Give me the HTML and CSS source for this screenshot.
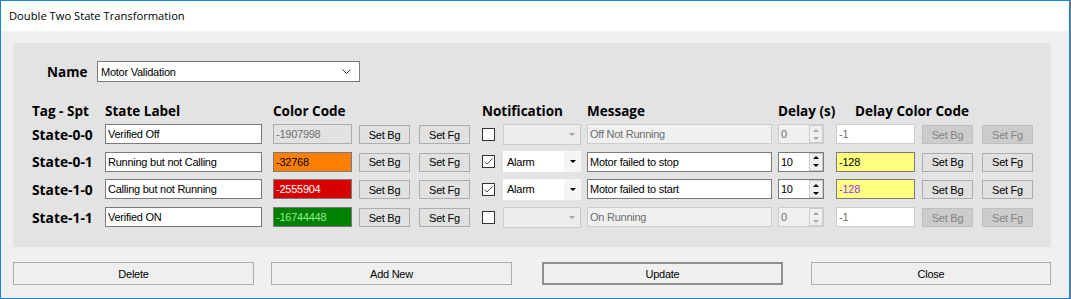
FILE: index.html
```html
<!DOCTYPE html>
<html lang="en">
<head>
    <meta charset="UTF-8">
    <title>Double Two State Transformation</title>
    <link rel="stylesheet" href="styles.css">
</head>
<body>

<div class="window">
    <div class="titlebar">Double Two State Transformation</div>

    <div class="client">
        <div class="panel">
            <div class="name-row">
                <label class="name-label">Name</label>
                <div class="combo name-combo">
                    <span>Motor Validation</span>
                    <svg class="chevron" width="9" height="5" viewBox="0 0 9 5"><polyline points="0.5,0.5 4.5,4.5 8.5,0.5" fill="none" stroke="#333" stroke-width="1"/></svg>
                </div>
            </div>

            <div class="states">
                <div class="head">Tag - Spt</div>
                <div class="head">State Label</div>
                <div class="head span3">Color Code</div>
                <div class="head span2">Notification</div>
                <div class="head">Message</div>
                <div class="head">Delay (s)</div>
                <div class="head span3 delay-head">Delay Color Code</div>

                <!-- State-0-0 -->
                <div class="tag">State-0-0</div>
                <input class="text label-box" value="Verified Off">
                <input class="text code off" value="-1907998" disabled>
                <button class="set">Set Bg</button>
                <button class="set">Set Fg</button>
                <span class="check"></span>
                <div class="combo notify disabled"><span></span><span class="arrow"><i></i></span></div>
                <input class="text msg" value="Off Not Running" disabled>
                <div class="spin disabled"><span>0</span><span class="spin-btns"><i class="up"></i><i class="down"></i></span></div>
                <input class="text code dim" value="-1" disabled>
                <button class="set" disabled>Set Bg</button>
                <button class="set" disabled>Set Fg</button>

                <!-- State-0-1 -->
                <div class="tag">State-0-1</div>
                <input class="text label-box" value="Running but not Calling">
                <input class="text code" style="background:#ff8000;color:#000" value="-32768">
                <button class="set">Set Bg</button>
                <button class="set">Set Fg</button>
                <span class="check checked"><svg width="11" height="11" viewBox="0 0 11 11"><polyline points="1.5,5.5 4,8 9.5,2.5" fill="none" stroke="#555" stroke-width="1"/></svg></span>
                <div class="combo notify"><span>Alarm</span><span class="arrow"><i></i></span></div>
                <input class="text msg" value="Motor failed to stop">
                <div class="spin"><span>10</span><span class="spin-btns"><i class="up"></i><i class="down"></i></span></div>
                <input class="text code" style="background:#ffff80;color:#000" value="-128">
                <button class="set">Set Bg</button>
                <button class="set">Set Fg</button>

                <!-- State-1-0 -->
                <div class="tag">State-1-0</div>
                <input class="text label-box" value="Calling but not Running">
                <input class="text code" style="background:#d90000;color:#fff" value="-2555904">
                <button class="set">Set Bg</button>
                <button class="set">Set Fg</button>
                <span class="check checked"><svg width="11" height="11" viewBox="0 0 11 11"><polyline points="1.5,5.5 4,8 9.5,2.5" fill="none" stroke="#555" stroke-width="1"/></svg></span>
                <div class="combo notify"><span>Alarm</span><span class="arrow"><i></i></span></div>
                <input class="text msg" value="Motor failed to start">
                <div class="spin"><span>10</span><span class="spin-btns"><i class="up"></i><i class="down"></i></span></div>
                <input class="text code" style="background:#ffff80;color:#9933ff" value="-128">
                <button class="set">Set Bg</button>
                <button class="set">Set Fg</button>

                <!-- State-1-1 -->
                <div class="tag">State-1-1</div>
                <input class="text label-box" value="Verified ON">
                <input class="text code" style="background:#008000;color:#90ee90" value="-16744448">
                <button class="set">Set Bg</button>
                <button class="set">Set Fg</button>
                <span class="check"></span>
                <div class="combo notify disabled"><span></span><span class="arrow"><i></i></span></div>
                <input class="text msg" value="On Running" disabled>
                <div class="spin disabled"><span>0</span><span class="spin-btns"><i class="up"></i><i class="down"></i></span></div>
                <input class="text code dim" value="-1" disabled>
                <button class="set" disabled>Set Bg</button>
                <button class="set" disabled>Set Fg</button>
            </div>
        </div>

        <div class="actions">
            <button class="action">Delete</button>
            <button class="action add">Add New</button>
            <button class="action update">Update</button>
            <button class="action close">Close</button>
        </div>
    </div>
</div>

</body>
</html>
```

FILE: styles.css
```css
body {
    margin: 0;
    background-color: #6f8196;
    font-family: "Liberation Sans", Arial, sans-serif;
    font-size: 11px;
    letter-spacing: -0.25px;
    color: #000;
}

.window {
    width: 1068px;
    height: 297px;
    border: 1px solid #1883d7;
    background-color: #f0f0f0;
}

.titlebar {
    height: 30px;
    line-height: 30px;
    padding-left: 8px;
    background-color: #fff;
    font-family: "Open Sans", sans-serif;
    font-size: 11.2px;
    letter-spacing: 0;
}

.client {
    padding: 12px 0 0 12px;
}

.panel {
    width: 1038px;
    height: 204px;
    box-sizing: border-box;
    padding: 18px 0 0 19px;
    background-color: #e3e3e3;
}

.name-row {
    display: flex;
    align-items: center;
    height: 21px;
}

.name-label {
    width: 65px;
    box-sizing: border-box;
    padding-left: 15px;
    font-family: "Open Sans", sans-serif;
    font-weight: bold;
    font-size: 13.5px;
    letter-spacing: 0;
}

.combo {
    display: flex;
    align-items: center;
    box-sizing: border-box;
    background-color: #fff;
}

.name-combo {
    width: 263px;
    height: 21px;
    padding: 0 8px 0 3px;
    border: 1px solid #7a7a7a;
    justify-content: space-between;
}

.states {
    margin-top: 23.5px;
    display: grid;
    grid-template-columns: 73px 168px 86px 60px 63px 21px 84px 191px 58px 86px 60px 52px;
    grid-template-rows: 11px repeat(4, 20px);
    row-gap: 7.67px;
    align-items: center;
}

.head {
    line-height: 11px;
    white-space: nowrap;
    font-family: "Open Sans", sans-serif;
    font-weight: bold;
    font-size: 13.5px;
    letter-spacing: 0;
    padding-top: 1px;
}
.span3 { grid-column: span 3; }
.span2 { grid-column: span 2; }
.delay-head { padding-left: 19px; }

.tag {
    font-family: "Open Sans", sans-serif;
    font-weight: bold;
    font-size: 13.8px;
    letter-spacing: 0;
    white-space: nowrap;
}

.text {
    height: 20px;
    box-sizing: border-box;
    margin: 0;
    padding: 0 0 0 2px;
    border: 1px solid #7a7a7a;
    background-color: #fff;
    font-family: "Liberation Sans", Arial, sans-serif;
    font-size: 11px;
    letter-spacing: -0.25px;
    color: #000;
    outline: none;
}
.label-box { width: 157px; }
.code { width: 79px; }
.msg { width: 185px; }

.text:disabled {
    border-color: #cccccc;
    background-color: #f0f0f0;
    color: #6d6d6d;
}
.text.off:disabled {
    border-color: #adadad;
    background-color: #e2e2e2;
}
.text.dim:disabled {
    background-color: #fff;
}

.set {
    width: 51px;
    height: 19px;
    margin: 1px 0 0 0;
    padding: 0;
    border: 1px solid #adadad;
    background-color: #e1e1e1;
    font-family: "Liberation Sans", Arial, sans-serif;
    font-size: 11px;
    letter-spacing: -0.25px;
    color: #000;
}
.set:disabled {
    border-color: #bfbfbf;
    background-color: #cccccc;
    color: #838383;
}

.check {
    width: 13px;
    height: 13px;
    box-sizing: border-box;
    border: 1px solid #333;
    background-color: #fff;
    display: flex;
    align-items: center;
    justify-content: center;
}

.notify {
    width: 78px;
    height: 21px;
    padding-left: 4px;
    justify-content: space-between;
}
.notify .arrow {
    width: 17px;
    height: 100%;
    display: flex;
    align-items: center;
    justify-content: center;
    background-color: #f5f5f5;
}
.arrow i {
    border-left: 3px solid transparent;
    border-right: 3px solid transparent;
    border-top: 3px solid #000;
}
.notify.disabled {
    border: 1px solid #cccccc;
    background-color: #ececec;
}
.notify.disabled .arrow { background-color: transparent; }
.notify.disabled .arrow i { border-top-color: #a6a6a6; }

.spin {
    width: 46px;
    height: 20px;
    box-sizing: border-box;
    border: 1px solid #7a7a7a;
    background-color: #fff;
    display: flex;
    justify-content: space-between;
    align-items: center;
    padding-left: 2px;
    font-size: 11px;
}
.spin-btns {
    width: 14px;
    height: 18px;
    box-sizing: border-box;
    border: 1px solid #cccccc;
    display: flex;
    flex-direction: column;
    align-items: center;
    justify-content: space-around;
    background-color: #f0f0f0;
}
.spin-btns .up {
    border-left: 3px solid transparent;
    border-right: 3px solid transparent;
    border-bottom: 3px solid #000;
}
.spin-btns .down {
    border-left: 3px solid transparent;
    border-right: 3px solid transparent;
    border-top: 3px solid #000;
}
.spin.disabled {
    border-color: #cccccc;
    background-color: #f0f0f0;
    color: #6d6d6d;
}
.spin.disabled .up { border-bottom-color: #a6a6a6; }
.spin.disabled .down { border-top-color: #a6a6a6; }

.actions {
    display: flex;
    margin-top: 15px;
}

.action {
    width: 241px;
    height: 23px;
    padding: 0;
    border: 1px solid #adadad;
    background-color: #efefef;
    font-family: "Liberation Sans", Arial, sans-serif;
    font-size: 11px;
    letter-spacing: -0.25px;
    color: #000;
}
.add { margin-left: 17px; }
.update {
    margin-left: 30px;
    border: 2px solid #8f8f8f;
}
.close {
    width: 240px;
    margin-left: 28px;
}
```
